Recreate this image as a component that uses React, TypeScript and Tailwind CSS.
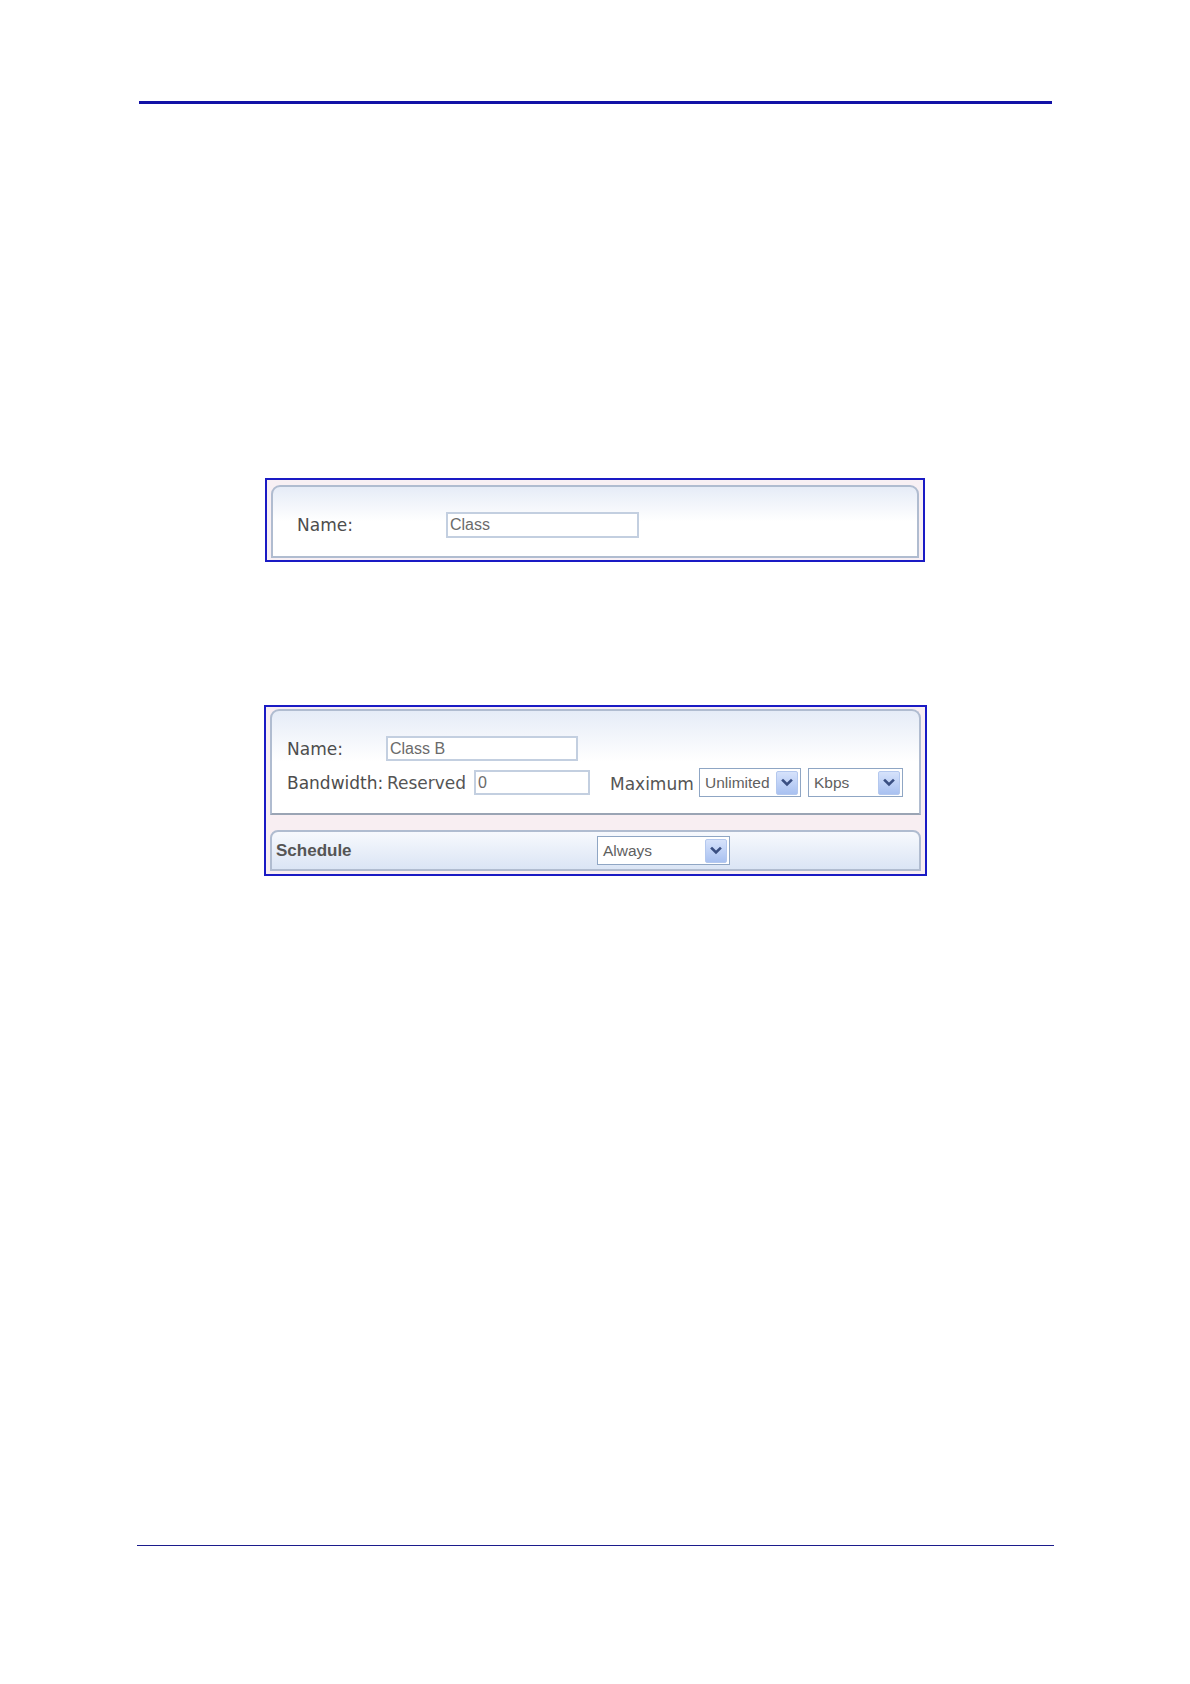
import React from "react";

const sans = { fontFamily: '"DejaVu Sans", Verdana, sans-serif' };

function Chevron() {
  return (
    <svg width="12" height="10" viewBox="0 0 12 10">
      <path d="M2 2.5 L6 6.5 L10 2.5" fill="none" stroke="#3a4f82" strokeWidth="2.6" strokeLinecap="square" />
    </svg>
  );
}

function Select({ label, w }: { label: string; w: string }) {
  return (
    <div className={`${w} h-[29px] border border-[#8fa6c4] bg-white flex items-center justify-between pl-[5px] pr-[2px] box-border`}>
      <span className="text-[15.5px] text-[#5f5f5f] leading-none" style={{ fontFamily: '"Liberation Sans", Arial, sans-serif' }}>
        {label}
      </span>
      <div className="w-[22px] h-[24px] rounded-[2px] border border-[#b4c8ee] bg-gradient-to-b from-[#d6e2fb] to-[#a9c1f1] flex items-center justify-center">
        <Chevron />
      </div>
    </div>
  );
}

function Input({ value, w }: { value: string; w: string }) {
  return (
    <div className={`${w} h-[25px] border-2 border-[#c3cfe0] bg-white flex items-center pl-[2px] box-border`}>
      <span className="text-[16px] text-[#6b6b6b] leading-none" style={{ fontFamily: '"Liberation Sans", Arial, sans-serif' }}>
        {value}
      </span>
    </div>
  );
}

export default function App() {
  return (
    <div className="w-[1190px] h-[1684px] bg-white flex flex-col" style={sans}>
      <div className="mt-[101px] ml-[139px] w-[913px] h-[3px] bg-[#1212a6]" />

      {/* Panel 1 */}
      <div className="mt-[374px] ml-[265px] w-[660px] h-[84px] border-2 border-[#1a1ac4] bg-[#f8f0f4] pt-[5px] px-[4px] pb-[2px] box-border">
        <div className="h-full rounded-t-[9px] border-2 border-[#b0bcd0] bg-gradient-to-b from-[#e6ecf7] via-white to-white box-border flex items-start pl-[24px] pt-[25px]">
          <div className="w-[149px] h-[26px] flex items-center text-[17px] text-[#4d4d4d] leading-none">Name:</div>
          <div className="w-[193px] h-[26px] border-2 border-[#c3cfe0] bg-white flex items-center pl-[2px] box-border">
            <span className="text-[16px] text-[#6b6b6b] leading-none" style={{ fontFamily: '"Liberation Sans", Arial, sans-serif' }}>
              Class
            </span>
          </div>
        </div>
      </div>

      {/* Panel 2 */}
      <div className="mt-[143px] ml-[264px] w-[663px] h-[171px] border-2 border-[#1a1ac4] bg-[#f8eef2] pt-[2px] px-[4px] pb-[3px] box-border flex flex-col">
        <div className="h-[106px] rounded-t-[9px] border-2 border-[#b0bcd0] border-b-[#9aa4b4] bg-gradient-to-b from-[#e6ecf7] via-white to-white box-border pl-[15px] pt-[25px] flex flex-col gap-[7px] text-[17px] text-[#4d4d4d] leading-none">
          <div className="flex items-center h-[25px]">
            <div className="w-[99px] pt-[2px]">Name:</div>
            <Input value="Class B" w="w-[192px]" />
          </div>
          <div className="flex items-center h-[29px]">
            <div className="w-[100px] pt-[1px]">Bandwidth:</div>
            <div className="w-[87px] text-[#555] pt-[2px]">Reserved</div>
            <Input value="0" w="w-[116px]" />
            <div className="ml-[20px] w-[89px] text-[#555] pt-[4px]">Maximum</div>
            <Select label="Unlimited" w="w-[102px]" />
            <div className="w-[7px]" />
            <Select label="Kbps" w="w-[95px]" />
          </div>
        </div>
        <div className="mt-[15px] h-[41px] rounded-t-[8px] border-2 border-[#b0bcd0] bg-gradient-to-b from-[#f7f9fd] to-[#dbe5f5] box-border flex items-center pl-[4px]">
          <div className="w-[321px] text-[17px] font-bold text-[#555]" style={{ fontFamily: '"Liberation Sans", Arial, sans-serif' }}>
            Schedule
          </div>
          <Select label="Always" w="w-[133px]" />
        </div>
      </div>

      <div className="mt-[669px] ml-[137px] w-[917px] h-[1px] bg-[#1c1c8c]" />
    </div>
  );
}
